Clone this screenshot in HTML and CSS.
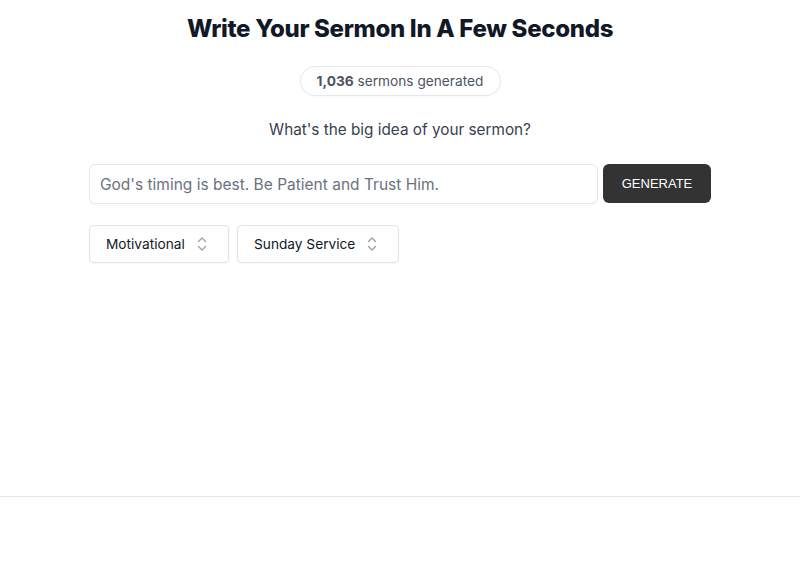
FILE: index.html
```html
<!DOCTYPE html>
<html>
<head>
<meta charset="utf-8">
<link rel="stylesheet" href="styles.css">
</head>
<body>
<main class="main">
  <h1 class="title">Write Your Sermon In A Few Seconds</h1>
  <div class="pill"><b>1,036</b> sermons generated</div>
  <p class="question">What's the big idea of your sermon?</p>
  <div class="form">
    <div class="input-row">
      <input class="input" type="text" placeholder="God's timing is best. Be Patient and Trust Him.">
      <button class="btn">GENERATE</button>
    </div>
    <div class="selects">
      <div class="select select-a"><span>Motivational</span>
        <svg class="chev" width="14" height="18" viewBox="0 0 14 18" fill="none" stroke="#9ca3af" stroke-width="1.4" stroke-linecap="round" stroke-linejoin="round"><path d="M3.5 6.5 7 3l3.5 3.5"/><path d="M3.5 11.5 7 15l3.5-3.5"/></svg>
      </div>
      <div class="select select-b"><span>Sunday Service</span>
        <svg class="chev" width="14" height="18" viewBox="0 0 14 18" fill="none" stroke="#9ca3af" stroke-width="1.4" stroke-linecap="round" stroke-linejoin="round"><path d="M3.5 6.5 7 3l3.5 3.5"/><path d="M3.5 11.5 7 15l3.5-3.5"/></svg>
      </div>
    </div>
  </div>
</main>
<footer class="footer"></footer>
</body>
</html>
```

FILE: styles.css
```css
* { box-sizing: border-box; }
html, body { margin: 0; padding: 0; }
body {
  font-family: Inter, "Noto Sans", sans-serif;
  background: #fff;
  color: #111827;
}
.main {
  height: 496px;
  display: flex;
  flex-direction: column;
  align-items: center;
  padding-top: 14px;
}
.title {
  margin: 0;
  font-size: 24px;
  line-height: 30px;
  font-weight: 800;
  color: #111827;
  letter-spacing: -0.32px;
}
.pill {
  margin-top: 22px;
  height: 30px;
  width: 201px;
  text-align: center;
  border: 1px solid #e5e7eb;
  border-radius: 999px;
  font-size: 13.7px;
  line-height: 28px;
  color: #4b5563;
  box-shadow: 0 1px 2px rgba(0,0,0,0.03);
}
.pill b { font-weight: 700; }
.question {
  margin: 23px 0 0;
  font-size: 15.3px;
  line-height: 22px;
  color: #374151;
}
.form {
  width: 622px;
  margin-top: 23px;
}
.input-row {
  display: flex;
  gap: 5px;
}
.input {
  flex: 1;
  height: 40px;
  border: 1px solid #e5e7eb;
  border-radius: 6px;
  padding: 0 10px;
  font-family: inherit;
  font-size: 15.5px;
  color: #111827;
  outline: none;
  box-shadow: 0 1px 2px rgba(0,0,0,0.04);
}
.input::placeholder { color: #6b7280; }
.btn {
  width: 108px;
  height: 39px;
  border: none;
  border-radius: 6px;
  background: #333333;
  color: #ffffff;
  font-family: "Liberation Sans", Arial, sans-serif;
  font-size: 13px;
}
.selects {
  display: flex;
  gap: 8px;
  margin-top: 21px;
}
.select {
  height: 38px;
  border: 1px solid #e0e2e6;
  border-radius: 4px;
  display: flex;
  align-items: center;
  padding: 0 0 0 16px;
  font-size: 13.7px;
  color: #111827;
  box-shadow: 0 1px 2px rgba(0,0,0,0.04);
}
.select-a { width: 140px; }
.select-b { width: 162px; }
.chev { margin-left: 10px; }
.footer {
  border-top: 1px solid #e5e7eb;
  height: 80px;
  background: #fefefe;
}
```
